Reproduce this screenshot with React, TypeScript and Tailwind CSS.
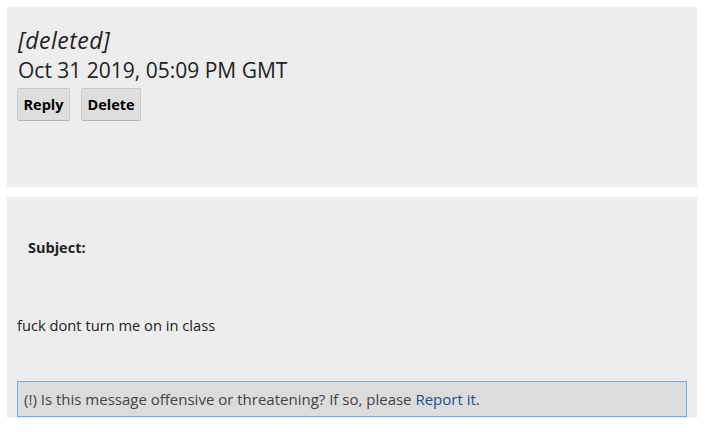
const App = () => {
    return (
        <div className="min-h-[432px] bg-white pt-[7px] pl-[7px] text-[#222]" style={{ fontFamily: "'Open Sans', 'Liberation Sans', sans-serif" }}>
            <div className="w-[690px] h-[180px] bg-[#ededed] pt-[18px] px-[11px]">
                <div className="text-[23px] leading-[30px] italic tracking-[0.5px]">[deleted]</div>
                <div className="text-[21px] leading-[30px]">Oct 31 2019, 05:09 PM GMT</div>
                <div className="flex gap-[11px] mt-[3px] -ml-[1px]">
                    <button className="h-[33px] w-[53px] bg-[#dedede] border border-[#c9c9c9] border-b-[#b5b5b5] rounded-[2px] text-[14.5px] font-bold text-black">Reply</button>
                    <button className="h-[33px] w-[60px] bg-[#dedede] border border-[#c9c9c9] border-b-[#b5b5b5] rounded-[2px] text-[14.5px] font-bold text-black">Delete</button>
                </div>
            </div>
            <div className="w-[690px] mt-[10px] bg-[#ededed] px-[10px] pb-[1px]">
                <div className="pt-[42px] pl-[11px] text-[14.5px] font-bold leading-[18px]">Subject:</div>
                <div className="mt-[59px] text-[14.7px] leading-[18px]">fuck dont turn me on in class</div>
                <div className="mt-[47px] h-[36px] border border-[#7ba7da] bg-[#dcdcdc] px-[6px] flex items-center text-[15px] text-[#444]">
                    <span>
                        (!) Is this message offensive or threatening? If so, please <a className="text-[#1d4f8c]">Report it</a>.
                    </span>
                </div>
            </div>
        </div>
    );
};

export default App;
